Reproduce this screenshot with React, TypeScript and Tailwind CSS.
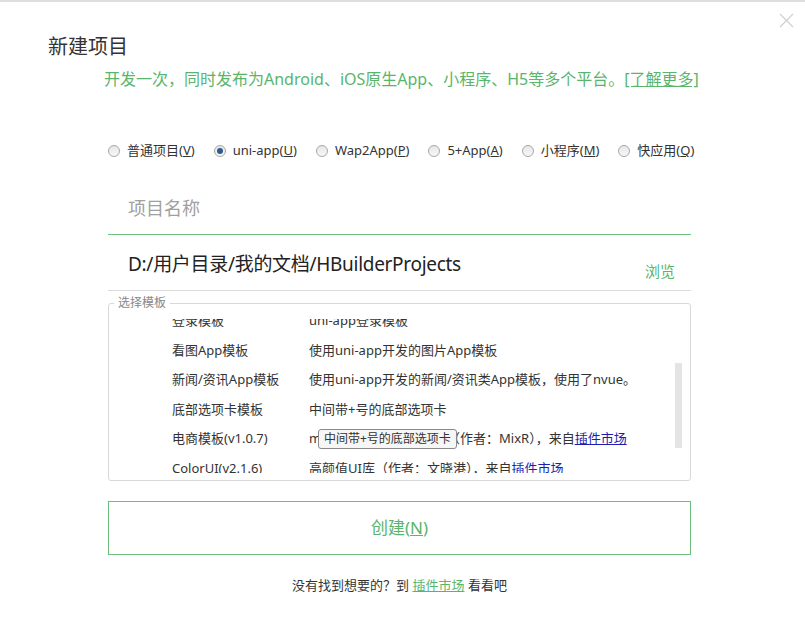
import React from 'react';

const font = { fontFamily: '"Noto Sans", "Noto Sans CJK SC", sans-serif' };

type Tpl = { name: string; desc: React.ReactNode; tip?: boolean };

const Market = () => <span className="text-[#1d1db0] underline">插件市场</span>;

const templates: Tpl[] = [
  { name: '登录模板', desc: 'uni-app登录模板' },
  { name: '看图App模板', desc: '使用uni-app开发的图片App模板' },
  { name: '新闻/资讯App模板', desc: '使用uni-app开发的新闻/资讯类App模板，使用了nvue。' },
  { name: '底部选项卡模板', desc: '中间带+号的底部选项卡' },
  {
    name: '电商模板(v1.0.7)',
    desc: (
      <>
        mall商城模板，uni-app（作者：MixR），来自<Market />
      </>
    ),
    tip: true,
  },
  {
    name: 'ColorUI(v2.1.6)',
    desc: (
      <>
        高颜值UI库（作者：文晓港），来自<Market />
      </>
    ),
  },
];

const radios = [
  { label: '普通项目', key: 'V' },
  { label: 'uni-app', key: 'U', checked: true },
  { label: 'Wap2App', key: 'P' },
  { label: '5+App', key: 'A' },
  { label: '小程序', key: 'M' },
  { label: '快应用', key: 'Q' },
];

const Radio = ({ checked }: { checked?: boolean }) => (
  <span className="w-[12px] h-[12px] shrink-0 rounded-full border border-[#a8a8a8] bg-gradient-to-b from-[#e6e6e6] to-[#f8f8f8] flex items-center justify-center">
    {checked && <span className="w-[6px] h-[6px] rounded-full bg-[#2d5d8e]" />}
  </span>
);

export default function App() {
  return (
    <div className="w-[805px] h-[625px] bg-white relative overflow-hidden text-[#333]" style={font}>
      <div className="h-[2px] bg-[#dedede]" />

      {/* close */}
      <svg className="absolute left-[779px] top-[13px]" width="15" height="15" viewBox="0 0 15 15">
        <path d="M1 1 L14 14 M14 1 L1 14" stroke="#cfcfcf" strokeWidth="1.2" />
      </svg>

      <h1 className="mt-[31px] pl-[48px] text-[20px] leading-[28px] text-[#333]">新建项目</h1>
      <p className="mt-[7px] pl-[104px] text-[16px] leading-[22px] text-[#59b56c]">
        开发一次，同时发布为Android、iOS原生App、小程序、H5等多个平台。
        <span className="underline">[了解更多]</span>
      </p>

      <div className="ml-[108px] w-[583px]">
        <div className="mt-[51px] flex items-center h-[20px] text-[13px] text-[#333] whitespace-nowrap">
          {radios.map((r, i) => (
            <div key={r.key} className={`flex items-center shrink-0 gap-[7px] ${i > 0 ? 'ml-[19px]' : ''}`}>
              <Radio checked={r.checked} />
              <span>
                {r.label}(<span className="underline">{r.key}</span>)
              </span>
            </div>
          ))}
        </div>

        <div className="mt-[20px] h-[54px] border-b border-[#6cbf7c] flex items-center pl-[20px] text-[18px] leading-[26px] text-[#a0a0a0]">
          项目名称
        </div>

        <div className="h-[56px] border-b border-[#dcdcdc] flex justify-between items-start pl-[20px] pr-[16px]">
          <span className="mt-[16px] text-[19px] leading-[26px] text-[#222] tracking-[-0.3px]">D:/用户目录/我的文档/HBuilderProjects</span>
          <span className="mt-[26px] text-[15px] leading-[20px] text-[#59b56c]">浏览</span>
        </div>

        <fieldset className="mt-[4px] border border-[#d8d8d8] rounded-[3px] pb-[7px]">
          <legend className="ml-[5px] px-[4px] text-[12px] leading-[16px] text-[#888]">选择模板</legend>
          <div className="mt-[8px] h-[154px] overflow-hidden relative">
            <div className="-mt-[13px]">
              {templates.map((t) => (
                <div key={t.name} className="h-[29.6px] flex items-center text-[13px] text-[#333]">
                  <span className="w-[137px] ml-[63px] shrink-0 whitespace-nowrap">{t.name}</span>
                  <span className="whitespace-nowrap relative">
                    {t.desc}
                    {t.tip && (
                      <span className="absolute left-[9px] top-[0px] h-[20px] px-[5px] flex items-center border border-[#8a8a8a] rounded-[3px] bg-[#f6f6f6] text-[12px] text-[#333] whitespace-nowrap">
                        中间带+号的底部选项卡
                      </span>
                    )}
                  </span>
                </div>
              ))}
            </div>
            <div className="absolute right-[8px] top-[44px] w-[7px] h-[85px] bg-[#e4e4e4]" />
          </div>
        </fieldset>

        <button className="mt-[20px] w-full h-[54px] border border-[#6cbf7c] text-[17px] text-[#59b56c] flex items-center justify-center">
          创建(<span className="underline">N</span>)
        </button>

        <p className="mt-[20px] text-center text-[13px] leading-[20px] text-[#333]">
          没有找到想要的？到 <span className="text-[#59b56c] underline">插件市场</span> 看看吧
        </p>
      </div>
    </div>
  );
}
